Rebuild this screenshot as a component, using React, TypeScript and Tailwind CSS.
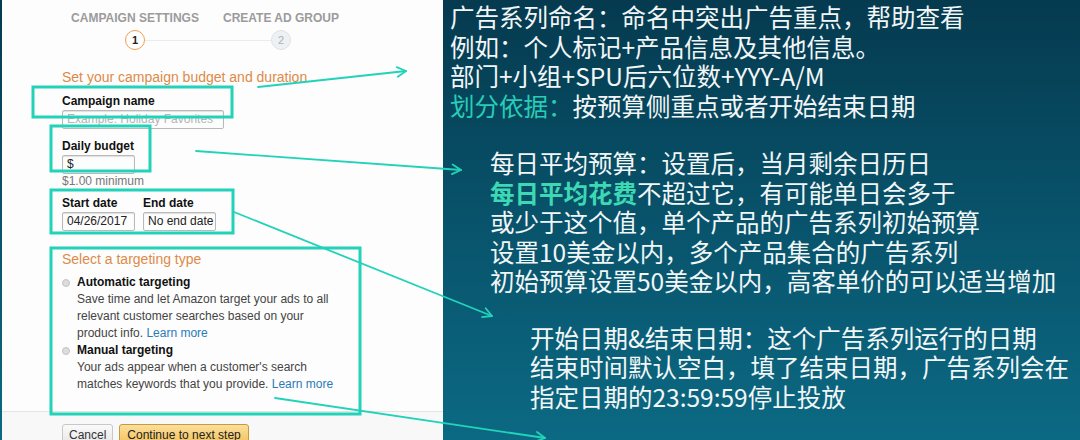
import React from 'react';

const TEAL = '#22d2b9';

type Arrow = { x1: number; y1: number; x2: number; y2: number };

const arrows: Arrow[] = [
  { x1: 258, y1: 87, x2: 406, y2: 71 },
  { x1: 196, y1: 151, x2: 461, y2: 170 },
  { x1: 234, y1: 212, x2: 492, y2: 316 },
  { x1: 275, y1: 398, x2: 545, y2: 438 },
];

const boxes = [
  { x: 33, y: 87, w: 199, h: 30 },
  { x: 51, y: 126, w: 99, h: 45 },
  { x: 51, y: 190, w: 182, h: 43 },
  { x: 51, y: 248, w: 309, h: 166 },
];

function head({ x1, y1, x2, y2 }: Arrow) {
  const a = Math.atan2(y2 - y1, x2 - x1);
  const len = 10;
  const spread = 0.5;
  const p1 = [x2 - len * Math.cos(a - spread), y2 - len * Math.sin(a - spread)];
  const p2 = [x2 - len * Math.cos(a + spread), y2 - len * Math.sin(a + spread)];
  return `${p1[0]},${p1[1]} ${x2},${y2} ${p2[0]},${p2[1]}`;
}

function Input({ value, placeholder, className }: { value?: string; placeholder?: string; className: string }) {
  return (
    <div
      className={`h-[19px] border border-[#b9b9b9] rounded-[2px] shadow-[inset_0_1px_1px_rgba(0,0,0,0.12)] px-[4px] text-[12px] leading-[17px] overflow-hidden whitespace-nowrap ${className}`}
    >
      {value ? <span className="text-[#222]">{value}</span> : <span className="text-[#b5b5b5]">{placeholder}</span>}
    </div>
  );
}

function Radio() {
  return <span className="mt-[5px] w-[8px] h-[8px] rounded-full border border-[#c4c4c4] bg-[#dcdcdc] shrink-0" />;
}

function CampaignForm() {
  return (
    <div className="ml-[2px] w-[441px] h-full bg-[#fdfdfd] flex flex-col font-['Liberation_Sans',Arial,sans-serif]">
      <div className="pl-[60px] flex-1">
        {/* steps */}
        <div className="flex pt-[11px] text-[12px] leading-[14px] font-bold text-[#9b9b9b]">
          <div className="w-[146px] text-center">CAMPAIGN SETTINGS</div>
          <div className="w-[146px] text-center">CREATE AD GROUP</div>
        </div>
        <div className="flex items-center mt-[5px] pl-[63px]">
          <div className="w-[20px] h-[20px] rounded-full border-[1.5px] border-[#efa14f] bg-white flex items-center justify-center text-[11px] font-bold text-[#222]">
            1
          </div>
          <div className="w-[126px] h-px bg-[#ececec]" />
          <div className="w-[20px] h-[20px] rounded-full border border-[#dde2e7] bg-[#eef1f4] flex items-center justify-center text-[11px] text-[#aab0b6]">
            2
          </div>
        </div>

        <div className="mt-[18px] text-[14px] leading-[18px] text-[#dd8a47]">Set your campaign budget and duration</div>

        <div className="mt-[8px] text-[12px] leading-[14px] font-bold text-[#111]">Campaign name</div>
        <Input placeholder="Example: Holiday Favorites" className="mt-[2px] w-[162px]" />

        <div className="mt-[10px] text-[12px] leading-[14px] font-bold text-[#111]">Daily budget</div>
        <Input value="$" className="mt-[2px] w-[73px]" />
        <div className="text-[12px] leading-[14px] text-[#777]">$1.00 minimum</div>

        <div className="mt-[8px] flex gap-[8px]">
          <div>
            <div className="text-[12px] leading-[14px] font-bold text-[#111]">Start date</div>
            <Input value="04/26/2017" className="mt-[2px] w-[73px]" />
          </div>
          <div>
            <div className="text-[12px] leading-[14px] font-bold text-[#111]">End date</div>
            <Input value="No end date" className="mt-[2px] w-[73px]" />
          </div>
        </div>

        <div className="mt-[19px] text-[14px] leading-[18px] text-[#dd8a47]">Select a targeting type</div>

        <div className="mt-[6px] text-[12px] leading-[17px] text-[#444]">
          <div className="flex gap-[7px]">
            <Radio />
            <div>
              <div className="font-bold text-[#111]">Automatic targeting</div>
              <div>Save time and let Amazon target your ads to all</div>
              <div>relevant customer searches based on your</div>
              <div>
                product info. <span className="text-[#2a7ab8]">Learn more</span>
              </div>
            </div>
          </div>
          <div className="flex gap-[7px]">
            <Radio />
            <div>
              <div className="font-bold text-[#111]">Manual targeting</div>
              <div>Your ads appear when a customer's search</div>
              <div>
                matches keywords that you provide. <span className="text-[#2a7ab8]">Learn more</span>
              </div>
            </div>
          </div>
        </div>
      </div>

      {/* footer */}
      <div className="h-[29px] border-t border-[#e4e4e4] bg-[#f8f8f8] pl-[60px] pt-[12px] flex gap-[6px] text-[12px]">
        <div className="h-[22px] px-[6px] border border-[#c8c8c8] rounded-[3px] bg-gradient-to-b from-[#fafafa] to-[#e6e6e6] text-[#333] leading-[20px]">
          Cancel
        </div>
        <div className="h-[22px] px-[7px] border border-[#c69a3f] rounded-[3px] bg-gradient-to-b from-[#fbdf9b] to-[#f4bf52] text-[#222] leading-[20px]">
          Continue to next step
        </div>
      </div>
    </div>
  );
}

function Notes() {
  return (
    <div className="flex-1 flex flex-col text-[24.5px] leading-[29.5px] text-[#f2f6f7] font-['Noto_Sans_CJK_SC','Noto_Sans',sans-serif] whitespace-nowrap">
      <div className="pl-[7px] pt-[2px]">
        <div>广告系列命名：命名中突出广告重点，帮助查看</div>
        <div>例如：个人标记+产品信息及其他信息。</div>
        <div>部门+小组+SPU后六位数+YYY-A/M</div>
        <div>
          <span className="text-[#27cdb6]">划分依据：</span>按预算侧重点或者开始结束日期
        </div>
      </div>

      <div className="pl-[47px] mt-[28px]">
        <div>每日平均预算：设置后，当月剩余日历日</div>
        <div>
          <span className="font-bold text-[#3dd8b4]">每日平均花费</span>不超过它，有可能单日会多于
        </div>
        <div>或少于这个值，单个产品的广告系列初始预算</div>
        <div>设置10美金以内，多个产品集合的广告系列</div>
        <div>初始预算设置50美金以内，高客单价的可以适当增加</div>
      </div>

      <div className="pl-[87px] mt-[27px]">
        <div>开始日期&amp;结束日期：这个广告系列运行的日期</div>
        <div>结束时间默认空白，填了结束日期，广告系列会在</div>
        <div>指定日期的23:59:59停止投放</div>
      </div>
    </div>
  );
}

export default function App() {
  return (
    <div className="relative w-[1080px] h-[440px] overflow-hidden flex bg-linear-to-b from-[#053a4f] via-[#08536b] to-[#0c6983]">
      <CampaignForm />
      <Notes />

      {/* annotation overlay */}
      <svg className="absolute inset-0 pointer-events-none" width={1080} height={440}>
        {boxes.map((b, i) => (
          <rect key={i} x={b.x} y={b.y} width={b.w} height={b.h} fill="none" stroke={TEAL} strokeWidth={3} />
        ))}
        {arrows.map((a, i) => (
          <g key={i} stroke={TEAL} strokeWidth={1.8} fill="none" strokeLinecap="round" strokeLinejoin="round">
            <line x1={a.x1} y1={a.y1} x2={a.x2} y2={a.y2} />
            <polyline points={head(a)} />
          </g>
        ))}
      </svg>
    </div>
  );
}
